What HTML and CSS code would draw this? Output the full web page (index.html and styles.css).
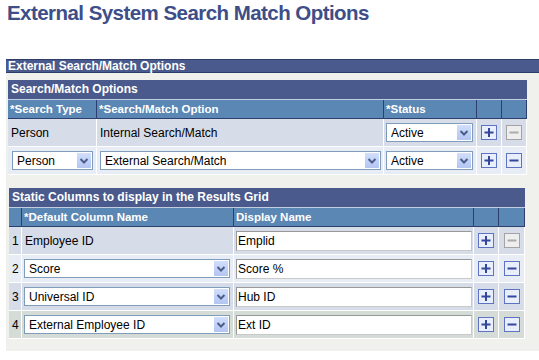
FILE: index.html
```html
<!DOCTYPE html>
<html lang="en">
<head>
    <meta charset="UTF-8">
    <meta name="viewport" content="width=device-width, initial-scale=1.0">
    <title>External System Search Match Options</title>
    <link rel="stylesheet" href="styles.css">
</head>
<body>
    <h1 class="page-title">External System Search Match Options</h1>

    <div class="groupbox">
        <div class="groupbox-label">External Search/Match Options</div>
        <div class="groupbox-body">

            <!-- Search/Match options grid -->
            <div class="grid grid-options">
                <div class="grid-title">Search/Match Options</div>

                <div class="head">*Search Type</div>
                <div class="head">*Search/Match Option</div>
                <div class="head">*Status</div>
                <div class="head"></div>
                <div class="head"></div>

                <div class="cell row-odd">Person</div>
                <div class="cell row-odd">Internal Search/Match</div>
                <div class="cell cell-ctl row-odd">
                    <span class="dropdown select-status">
                        <select><option>Active</option><option>Inactive</option></select>
                        <span class="dropdown-arrow"><svg width="14" height="15" viewBox="0 0 14 15"><path d="M3.5 6l3.5 3.5L10.5 6" fill="none" stroke="#4b5d8b" stroke-width="2"/></svg></span>
                    </span>
                </div>
                <div class="cell cell-btn row-odd">
                    <svg class="btn-icon" width="16" height="15" viewBox="0 0 16 15"><rect x="0.5" y="0.5" width="15" height="14" fill="#e8eefc" stroke="#5e73c2"/><path d="M3.5 7.5h9M8 3v9" stroke="#32469a" stroke-width="2"/></svg>
                </div>
                <div class="cell cell-btn row-odd">
                    <svg class="btn-icon" width="16" height="15" viewBox="0 0 16 15"><rect x="0.5" y="0.5" width="15" height="14" fill="#eeeeee" stroke="#a3a3a3"/><path d="M3.5 7.5h9" stroke="#ababab" stroke-width="2"/></svg>
                </div>

                <div class="cell cell-ctl row-even">
                    <span class="dropdown select-type">
                        <select><option>Person</option></select>
                        <span class="dropdown-arrow"><svg width="14" height="15" viewBox="0 0 14 15"><path d="M3.5 6l3.5 3.5L10.5 6" fill="none" stroke="#4b5d8b" stroke-width="2"/></svg></span>
                    </span>
                </div>
                <div class="cell cell-ctl row-even">
                    <span class="dropdown select-option">
                        <select><option>External Search/Match</option><option>Internal Search/Match</option></select>
                        <span class="dropdown-arrow"><svg width="14" height="15" viewBox="0 0 14 15"><path d="M3.5 6l3.5 3.5L10.5 6" fill="none" stroke="#4b5d8b" stroke-width="2"/></svg></span>
                    </span>
                </div>
                <div class="cell cell-ctl row-even">
                    <span class="dropdown select-status">
                        <select><option>Active</option><option>Inactive</option></select>
                        <span class="dropdown-arrow"><svg width="14" height="15" viewBox="0 0 14 15"><path d="M3.5 6l3.5 3.5L10.5 6" fill="none" stroke="#4b5d8b" stroke-width="2"/></svg></span>
                    </span>
                </div>
                <div class="cell cell-btn row-even">
                    <svg class="btn-icon" width="16" height="15" viewBox="0 0 16 15"><rect x="0.5" y="0.5" width="15" height="14" fill="#e8eefc" stroke="#5e73c2"/><path d="M3.5 7.5h9M8 3v9" stroke="#32469a" stroke-width="2"/></svg>
                </div>
                <div class="cell cell-btn row-even">
                    <svg class="btn-icon" width="16" height="15" viewBox="0 0 16 15"><rect x="0.5" y="0.5" width="15" height="14" fill="#e8eefc" stroke="#5e73c2"/><path d="M3.5 7.5h9" stroke="#32469a" stroke-width="2"/></svg>
                </div>
            </div>

            <!-- Static columns grid -->
            <div class="grid grid-columns">
                <div class="grid-title">Static Columns to display in the Results Grid</div>

                <div class="head"></div>
                <div class="head">*Default Column Name</div>
                <div class="head">Display Name</div>
                <div class="head"></div>
                <div class="head"></div>

                <div class="cell cell-num row-odd">1</div>
                <div class="cell row-odd">Employee ID</div>
                <div class="cell cell-ctl row-odd"><input class="text-input" type="text" value="Emplid"></div>
                <div class="cell cell-btn row-odd">
                    <svg class="btn-icon" width="16" height="15" viewBox="0 0 16 15"><rect x="0.5" y="0.5" width="15" height="14" fill="#e8eefc" stroke="#5e73c2"/><path d="M3.5 7.5h9M8 3v9" stroke="#32469a" stroke-width="2"/></svg>
                </div>
                <div class="cell cell-btn row-odd">
                    <svg class="btn-icon" width="16" height="15" viewBox="0 0 16 15"><rect x="0.5" y="0.5" width="15" height="14" fill="#eeeeee" stroke="#a3a3a3"/><path d="M3.5 7.5h9" stroke="#ababab" stroke-width="2"/></svg>
                </div>

                <div class="cell cell-num row-even">2</div>
                <div class="cell cell-ctl row-even">
                    <span class="dropdown select-column">
                        <select><option>Score</option></select>
                        <span class="dropdown-arrow"><svg width="14" height="15" viewBox="0 0 14 15"><path d="M3.5 6l3.5 3.5L10.5 6" fill="none" stroke="#4b5d8b" stroke-width="2"/></svg></span>
                    </span>
                </div>
                <div class="cell cell-ctl row-even"><input class="text-input" type="text" value="Score %"></div>
                <div class="cell cell-btn row-even">
                    <svg class="btn-icon" width="16" height="15" viewBox="0 0 16 15"><rect x="0.5" y="0.5" width="15" height="14" fill="#e8eefc" stroke="#5e73c2"/><path d="M3.5 7.5h9M8 3v9" stroke="#32469a" stroke-width="2"/></svg>
                </div>
                <div class="cell cell-btn row-even">
                    <svg class="btn-icon" width="16" height="15" viewBox="0 0 16 15"><rect x="0.5" y="0.5" width="15" height="14" fill="#e8eefc" stroke="#5e73c2"/><path d="M3.5 7.5h9" stroke="#32469a" stroke-width="2"/></svg>
                </div>

                <div class="cell cell-num row-odd">3</div>
                <div class="cell cell-ctl row-odd">
                    <span class="dropdown select-column">
                        <select><option>Universal ID</option></select>
                        <span class="dropdown-arrow"><svg width="14" height="15" viewBox="0 0 14 15"><path d="M3.5 6l3.5 3.5L10.5 6" fill="none" stroke="#4b5d8b" stroke-width="2"/></svg></span>
                    </span>
                </div>
                <div class="cell cell-ctl row-odd"><input class="text-input" type="text" value="Hub ID"></div>
                <div class="cell cell-btn row-odd">
                    <svg class="btn-icon" width="16" height="15" viewBox="0 0 16 15"><rect x="0.5" y="0.5" width="15" height="14" fill="#e8eefc" stroke="#5e73c2"/><path d="M3.5 7.5h9M8 3v9" stroke="#32469a" stroke-width="2"/></svg>
                </div>
                <div class="cell cell-btn row-odd">
                    <svg class="btn-icon" width="16" height="15" viewBox="0 0 16 15"><rect x="0.5" y="0.5" width="15" height="14" fill="#e8eefc" stroke="#5e73c2"/><path d="M3.5 7.5h9" stroke="#32469a" stroke-width="2"/></svg>
                </div>

                <div class="cell cell-num row-current">4</div>
                <div class="cell cell-ctl row-current">
                    <span class="dropdown select-column">
                        <select><option>External Employee ID</option></select>
                        <span class="dropdown-arrow"><svg width="14" height="15" viewBox="0 0 14 15"><path d="M3.5 6l3.5 3.5L10.5 6" fill="none" stroke="#4b5d8b" stroke-width="2"/></svg></span>
                    </span>
                </div>
                <div class="cell cell-ctl row-current"><input class="text-input" type="text" value="Ext ID"></div>
                <div class="cell cell-btn row-current">
                    <svg class="btn-icon" width="16" height="15" viewBox="0 0 16 15"><rect x="0.5" y="0.5" width="15" height="14" fill="#e8eefc" stroke="#5e73c2"/><path d="M3.5 7.5h9M8 3v9" stroke="#32469a" stroke-width="2"/></svg>
                </div>
                <div class="cell cell-btn row-current">
                    <svg class="btn-icon" width="16" height="15" viewBox="0 0 16 15"><rect x="0.5" y="0.5" width="15" height="14" fill="#e8eefc" stroke="#5e73c2"/><path d="M3.5 7.5h9" stroke="#32469a" stroke-width="2"/></svg>
                </div>
            </div>

        </div>
    </div>
</body>
</html>
```

FILE: styles.css
```css
body {
    margin: 0;
    font-family: "Liberation Sans", Arial, sans-serif;
    font-size: 12px;
    color: #000;
    background-color: white;
}

.page-title {
    margin: 0;
    padding: 1px 7px 0;
    height: 24px;
    font-size: 20.5px;
    line-height: 24px;
    letter-spacing: -0.55px;
    font-weight: bold;
    color: #3d4e88;
}

/* Group box */
.groupbox {
    margin: 34px 0 0 6px;
}

.groupbox-label {
    height: 12px;
    padding-left: 2px;
    background-color: #4a5a8c;
    border-top: 1px solid #2f3d69;
    border-bottom: 1px solid #2f3d69;
    color: white;
    font-weight: bold;
    font-size: 12px;
    line-height: 12px;
}

.groupbox-body {
    background-color: #f0f1ec;
    padding: 7px 12px 12px 2px;
}

/* Grids */
.grid {
    display: grid;
}

.grid-options {
    grid-template-columns: 89px 287px 93px 25px 25px;
}

.grid-columns {
    grid-template-columns: 13px 212px 240px 25px 26px;
    margin: 13px 0 0 1px;
}

.grid > div {
    box-sizing: border-box;
}

.grid-title {
    grid-column: 1 / -1;
    height: 20px;
    padding-left: 3px;
    background-color: #4a5a8c;
    border-bottom: 1px solid #c3cde0;
    color: white;
    font-weight: bold;
    font-size: 12px;
    line-height: 19px;
}

.head {
    height: 19px;
    padding-left: 2px;
    background-color: #5b87b4;
    border-right: 1px solid #2d3f6f;
    border-bottom: 1px solid #2d3f6f;
    color: white;
    font-weight: bold;
    font-size: 11.5px;
    line-height: 18px;
    white-space: nowrap;
    overflow: hidden;
}

.cell {
    height: 28px;
    padding-left: 3px;
    border-right: 1px solid white;
    border-bottom: 1px solid white;
    display: flex;
    align-items: center;
    white-space: nowrap;
}

.cell-ctl {
    padding-left: 2px;
}

.cell-num {
    padding-left: 3px;
}

.cell-btn {
    padding-left: 0;
    justify-content: center;
}

.row-odd {
    background-color: #d6dce8;
}

.row-even {
    background-color: #e8ecf4;
}

.row-current {
    background-color: #d5dbd7;
}

/* Drop-down lists */
.dropdown {
    position: relative;
    display: block;
    height: 19px;
}

.dropdown select {
    appearance: none;
    -webkit-appearance: none;
    box-sizing: border-box;
    width: 100%;
    height: 19px;
    margin: 0;
    padding: 0 18px 0 4px;
    border: 1px solid #7f9cba;
    border-radius: 0;
    background-color: white;
    font-family: "Liberation Sans", Arial, sans-serif;
    font-size: 12px;
    color: #000;
}

.dropdown-arrow {
    position: absolute;
    top: 2px;
    right: 2px;
    width: 14px;
    height: 15px;
    background: linear-gradient(#d2defb, #b3c6f1);
    pointer-events: none;
}

.dropdown-arrow svg {
    display: block;
}

.select-type {
    width: 81px;
    margin-left: 2px;
}

.select-option {
    width: 281px;
    margin-left: 1px;
}

.select-status {
    width: 87px;
}

.select-column {
    width: 206px;
}

/* Text inputs */
.text-input {
    box-sizing: border-box;
    width: 236px;
    height: 20px;
    margin: 0;
    padding: 0 1px;
    border: 1px solid;
    border-color: #999 #c9c9c9 #c9c9c9 #999;
    border-radius: 0;
    background-color: white;
    font-family: "Liberation Sans", Arial, sans-serif;
    font-size: 12px;
    color: #000;
}

.btn-icon {
    display: block;
}
```
